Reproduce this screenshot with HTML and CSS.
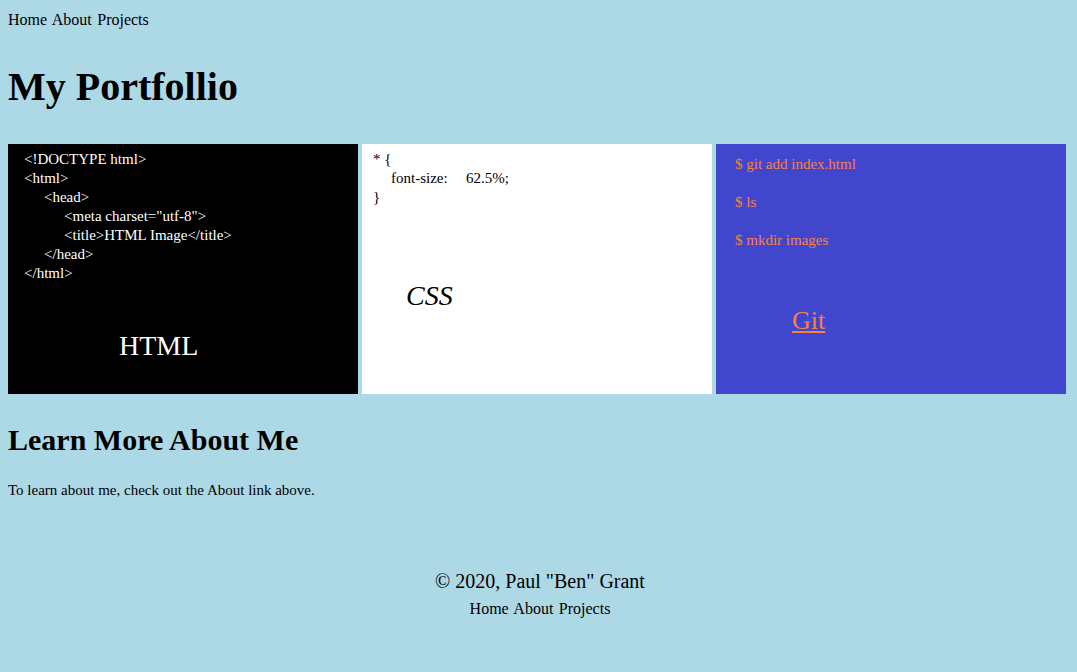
FILE: index.html
```html
<!DOCTYPE html>
<html lang="en">
<head>
<meta charset="utf-8">
<title>My Portfollio</title>
<link rel="stylesheet" href="styles.css">
</head>
<body>
<nav class="top-nav">
  <a href="#">Home</a> <a href="#">About</a> <a href="#">Projects</a>
</nav>
<h1 class="title">My Portfollio</h1>
<section class="cards">
  <div class="card card-html">
    <div class="code">
      <div class="line">&lt;!DOCTYPE html&gt;</div>
      <div class="line">&lt;html&gt;</div>
      <div class="line ind1">&lt;head&gt;</div>
      <div class="line ind2">&lt;meta charset="utf-8"&gt;</div>
      <div class="line ind2">&lt;title&gt;HTML Image&lt;/title&gt;</div>
      <div class="line ind1">&lt;/head&gt;</div>
      <div class="line">&lt;/html&gt;</div>
    </div>
    <div class="label label-html">HTML</div>
  </div>
  <div class="card card-css">
    <div class="code">
      <div class="line">* {</div>
      <div class="line ind-css"><span class="prop">font-size:</span>62.5%;</div>
      <div class="line">}</div>
    </div>
    <div class="label label-css">CSS</div>
  </div>
  <div class="card card-git">
    <p class="cmd">$ git add index.html</p>
    <p class="cmd">$ ls</p>
    <p class="cmd">$ mkdir images</p>
    <div class="label label-git"><a href="#">Git</a></div>
  </div>
</section>
<h2 class="subtitle">Learn More About Me</h2>
<p class="about">To learn about me, check out the About link above.</p>
<footer class="footer">
  <div class="copy">&copy; 2020, Paul "Ben" Grant</div>
  <nav class="foot-nav">
    <a href="#">Home</a> <a href="#">About</a> <a href="#">Projects</a>
  </nav>
</footer>
</body>
</html>
```
FILE: styles.css
```css
html, body {
  margin: 0;
  padding: 0;
}
body {
  background: #add8e6;
  color: #000;
  font-family: "Liberation Serif", "Times New Roman", serif;
  padding: 0 8px;
}
a {
  color: #000;
  text-decoration: none;
}
.top-nav {
  margin-top: 10px;
  font-size: 16px;
  line-height: 20px;
  word-spacing: 1.5px;
}
.title {
  font-size: 40px;
  line-height: 48px;
  font-weight: bold;
  margin: 33px 0 33px 0;
}
.cards {
  display: flex;
  gap: 4px;
}
.card {
  width: 350px;
  height: 250px;
  box-sizing: border-box;
  font-size: 15px;
  line-height: 19px;
}
.card-html {
  background: #000;
  color: #fff;
  padding: 6px 0 0 16px;
}
.card-css {
  background: #fff;
  color: #000;
  padding: 6px 0 0 11px;
}
.card-git {
  background: #4047cd;
  color: #fa8040;
  padding: 11px 0 0 19px;
}
.ind1 { padding-left: 20px; }
.ind2 { padding-left: 40px; }
.ind-css { padding-left: 18px; }
.prop {
  display: inline-block;
  width: 75px;
}
.cmd {
  margin: 0 0 19px 0;
}
.label {
  font-size: 28px;
  line-height: 32px;
}
.label-html {
  margin: 47px 0 0 95px;
}
.label-css {
  font-style: italic;
  margin: 73px 0 0 33px;
}
.label-git {
  font-size: 26px;
  line-height: 30px;
  margin: 56px 0 0 57px;
}
.label-git a {
  color: #fa8040;
  text-decoration: underline;
}
.subtitle {
  font-size: 30px;
  line-height: 36px;
  font-weight: bold;
  margin: 28px 0 0 0;
}
.about {
  font-size: 15px;
  line-height: 19px;
  margin: 23px 0 0 0;
}
.footer {
  text-align: center;
  margin-top: 69px;
  padding-left: 3px;
}
.copy {
  font-size: 20px;
  line-height: 24px;
}
.foot-nav {
  font-size: 16px;
  line-height: 20px;
  margin-top: 6px;
  word-spacing: 1.5px;
}
```
